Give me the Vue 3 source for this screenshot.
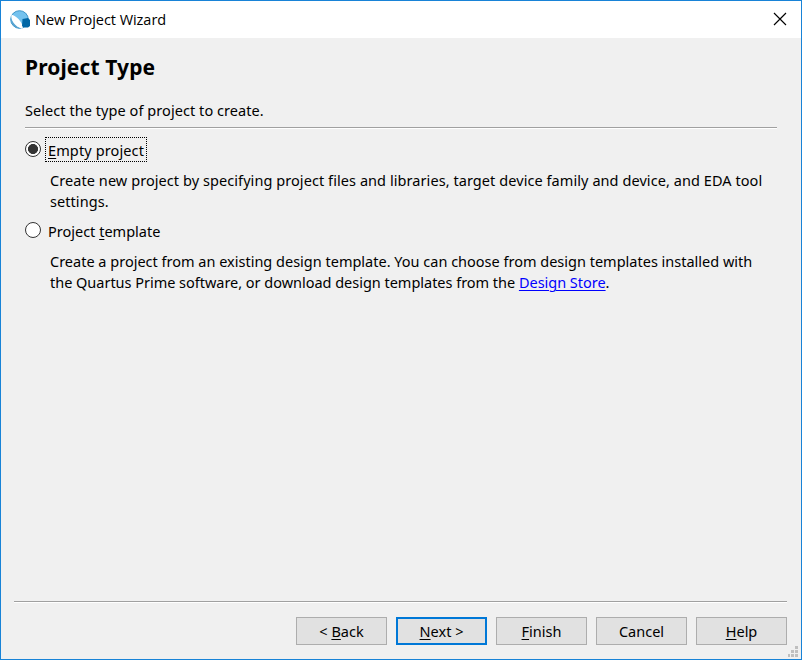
<script setup>
import { ref } from 'vue'

const selected = ref('empty')
const buttons = [
  { pre: '< ', key: 'B', post: 'ack' },
  { pre: '', key: 'N', post: 'ext >', primary: true },
  { pre: '', key: 'F', post: 'inish' },
  { pre: 'Cancel', key: '', post: '' },
  { pre: '', key: 'H', post: 'elp' },
]
</script>

<template>
  <div class="window">
    <header class="titlebar">
      <svg class="logo" width="22" height="20" viewBox="0 0 22 20">
        <circle cx="9.5" cy="9.500" r="8.800" fill="#74c2ee" stroke="#3a94c8" stroke-width="1" />
        <path d="M1.200 5.500C1.500 12.500 5.500 17.500 11.500 18.400L14 16.500C11.500 14.500 9.500 7.500 2.200 4.800Z" fill="#fff" />
        <path d="M.7 8C1 14.500 5.500 18.900 11 18.400C6.500 17 2.800 13 .7 8Z" fill="#5aa3cf" />
        <path d="M12.500 9L18 8L20 10V16L18 17.500H13.500L12 16Z" fill="#0067a6" />
      </svg>
      <span class="caption">New Project Wizard</span>
      <svg class="close" width="14" height="14" viewBox="0 0 14 14">
        <path d="M1 1L13 13M13 1L1 13" stroke="#000" stroke-width="1.150" />
      </svg>
    </header>

    <main class="page">
      <h1>Project Type</h1>
      <p class="intro">Select the type of project to create.</p>
      <div class="rule"></div>

      <div class="option" @click="selected = 'empty'">
        <span class="radio" :class="{ on: selected === 'empty' }"></span>
        <span class="label focus"><span class="t-empty"><u>E</u>mpty project</span></span>
      </div>
      <p class="desc">
        <span class="line l1">Create new project by specifying project files and libraries, target device family and device, and EDA tool</span>
        <span class="line l1">settings.</span>
      </p>

      <div class="option" @click="selected = 'template'">
        <span class="radio" :class="{ on: selected === 'template' }"></span>
        <span class="label"><span class="t-template">Project <u>t</u>emplate</span></span>
      </div>
      <p class="desc">
        <span class="line l3">Create a project from an existing design template. You can choose from design templates installed with</span>
        <span class="line l4">the Quartus Prime software, or download design templates from the <a>Design Store</a>.</span>
      </p>
    </main>

    <footer class="footer">
      <div class="rule"></div>
      <div class="buttons">
        <button v-for="b in buttons" :key="b.key" :class="{ primary: b.primary }">
          <span>{{ b.pre }}<u v-if="b.key">{{ b.key }}</u>{{ b.post }}</span>
        </button>
      </div>
    </footer>
    <svg class="grip" width="11" height="11" viewBox="0 0 11 11" fill="#bfbfbf">
      <path d="M7 0h3v3h-3zM3 4h3v3h-3zM7 4h3v3h-3zM0 8h2v3h-2zM3 8h3v3h-3zM7 8h3v3h-3z" />
    </svg>
  </div>
</template>

<style scoped>
.window {
  position: relative;
  box-sizing: border-box;
  width: 802px;
  height: 660px;
  display: flex;
  flex-direction: column;
  border: 1px solid #1883d7;
  background: #f0f0f0;
  color: #000;
  font: 14.5px/21px "Noto Sans", sans-serif;
}
.titlebar {
  height: 37px;
  flex: none;
  display: flex;
  align-items: center;
  padding: 0 14px 0 9px;
  box-sizing: border-box;
  background: #fff;
}
.logo { flex: none; margin-right: 3px; }
.caption { flex: 1; font-family: "Open Sans", sans-serif; font-size: 14.5px; letter-spacing: -0.04px; white-space: nowrap; }
.close { flex: none; margin-bottom: 1px; }
.page { flex: 1; padding: 14px 24px 0; }
h1 { margin: 0; font-size: 21px; line-height: 30px; font-weight: 700; letter-spacing: 0.12px; }
p { margin: 0; }
.intro { margin-top: 18px; letter-spacing: 0.06px; }
.rule { height: 1px; background: #a0a0a0; border-bottom: 1px solid #fff; }
.page .rule { margin-top: 6px; }
.option { display: flex; align-items: flex-start; height: 25px; margin-top: 8px; }
.radio {
  box-sizing: border-box;
  flex: none;
  width: 16px;
  height: 16px;
  margin-top: 4px;
  border: 1px solid #333;
  border-radius: 50%;
  background: #fff;
}
.radio.on { background: radial-gradient(circle, #333 4.700px, #fff 5.300px); }
.label {
  box-sizing: border-box;
  height: 25px;
  margin-left: 4px;
  padding: 2px 2px 0;
  border: 1px solid transparent;
  white-space: nowrap;
}
.label.focus { width: 102px; border: 1px dotted #000; }
.t-empty { letter-spacing: 0.12px; }
.desc { padding-left: 25px; margin-top: 8px; }
.line { display: block; white-space: nowrap; width: max-content; }
.l1 { letter-spacing: 0.07px; }
.l4 { letter-spacing: -0.022px; }
.desc + .option { margin-top: 6px; }
a { color: #00f; text-decoration: underline; }
u, a { text-underline-offset: 2px; text-decoration-thickness: 1px; }
.footer { padding: 0 14px 14px 13px; }
.buttons { display: flex; justify-content: flex-end; gap: 9px; margin-top: 14px; }
button {
  box-sizing: border-box;
  width: 91px;
  height: 28px;
  padding: 0;
  border: 1px solid #adadad;
  border-radius: 0;
  background: #e1e1e1;
  color: #000;
  font: inherit;
}
button.primary { border: 2px solid #0078d7; }
.grip { position: absolute; right: 2px; bottom: 2px; }
</style>
<style>
body { margin: 0; overflow: hidden; }
</style>
